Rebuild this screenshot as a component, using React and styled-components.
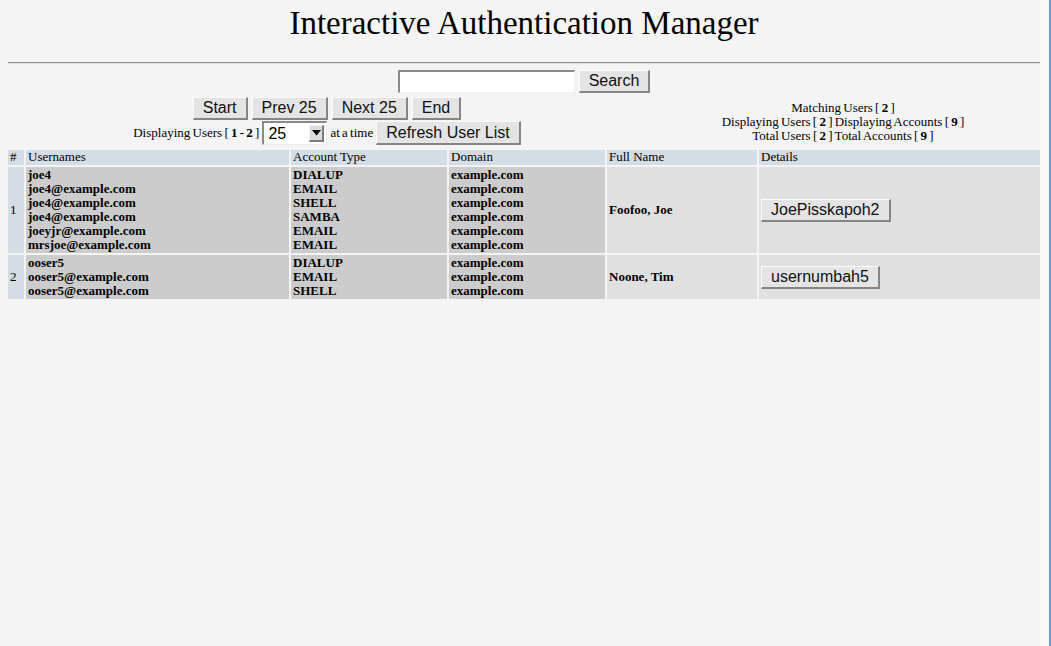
import React from "react";
import styled, { createGlobalStyle } from "styled-components";

const Global = createGlobalStyle`
  html, body { margin: 0; padding: 0; background: #f4f4f4; }
  body { font-family: "Liberation Serif", "Times New Roman", serif; font-size: 13px; color: #000; }
`;

const Frame = styled.div`
  display: flex;
  min-height: 646px;
`;

const Page = styled.div`
  width: 1032px;
  margin-left: 8px;
  display: flex;
  flex-direction: column;
`;

const Edge = styled.div`
  flex: 1;
  background: #f8f8f6;
  border-right: 2px solid #6f9fd8;
`;

const Title = styled.h1`
  margin: 3px 0 0;
  font-weight: normal;
  font-size: 33px;
  line-height: 41px;
  text-align: center;
`;

const Rule = styled.div`
  margin-top: 18px;
  height: 1px;
  background: #8c8c8c;
  border-bottom: 1px solid #e2e2e2;
`;

const SearchRow = styled.div`
  margin-top: 6px;
  display: flex;
  justify-content: center;
  gap: 4px;
`;

const TextInput = styled.input`
  box-sizing: border-box;
  width: 177px;
  height: 23px;
  background: #fff;
  border-style: solid;
  border-width: 2px 1px 1px 2px;
  border-color: #8a8a8a #f0f0f0 #f0f0f0 #8a8a8a;
  padding: 0 3px;
  font-family: "Liberation Sans", Arial, sans-serif;
  font-size: 16px;
  outline: none;
`;

const Button = styled.button`
  box-sizing: border-box;
  height: ${(p) => (p.$tall ? 24 : 23)}px;
  padding: 0 9px;
  background: #e4e4e4;
  border-style: solid;
  border-width: 1px 2px 2px 1px;
  border-color: #fbfbfb #858585 #858585 #fbfbfb;
  font-family: "Liberation Sans", Arial, sans-serif;
  font-size: 16px;
  line-height: 20px;
  color: #111;
  cursor: pointer;
  white-space: nowrap;
`;

const Controls = styled.div`
  margin-top: 4px;
  display: flex;
`;

const LeftCell = styled.div`
  width: 638px;
  display: flex;
  flex-direction: column;
  align-items: center;
  gap: 1px;
`;

const RightCell = styled.div`
  flex: 1;
  display: flex;
  flex-direction: column;
  justify-content: center;
  align-items: center;
  line-height: 14px;
  padding-top: 2px;
`;

const ButtonRow = styled.div`
  display: flex;
  align-items: center;
  gap: ${(p) => p.$gap || 4}px;
`;

const Label = styled.span`
  white-space: nowrap;
  line-height: 14px;
  word-spacing: -1px;
`;

const SelectBox = styled.div`
  box-sizing: border-box;
  width: 65px;
  height: 24px;
  display: flex;
  align-items: center;
  justify-content: space-between;
  background: #fff;
  border-style: solid;
  border-width: 2px 1px 1px 2px;
  border-color: #8a8a8a #eeeeee #eeeeee #8a8a8a;
  padding: 0 2px 0 4px;
  font-family: "Liberation Sans", Arial, sans-serif;
  font-size: 16px;
`;

const ArrowBox = styled.span`
  box-sizing: border-box;
  width: 15px;
  height: 17px;
  display: flex;
  align-items: center;
  justify-content: center;
  background: #dcdcdc;
  border-style: solid;
  border-width: 1px 2px 2px 1px;
  border-color: #f6f6f6 #7c7c7c #7c7c7c #f6f6f6;
`;

const Table = styled.table`
  margin: 3px -2px 0;
  width: 1036px;
  table-layout: fixed;
  border-collapse: separate;
  border-spacing: 2px;
`;

const Col = styled.col`
  width: ${(p) => p.$w}px;
`;

const Th = styled.th`
  background: #d4dde5;
  font-weight: normal;
  text-align: left;
  padding: 0 2px 1px;
  line-height: 14px;
  white-space: nowrap;
  overflow: hidden;
`;

const toneColors = {
  idx: "#d5dce3",
  dark: "#cccccc",
  light: "#e0e0e0",
};

const Td = styled.td`
  background: ${(p) => toneColors[p.$tone]};
  font-weight: ${(p) => (p.$tone === "idx" ? "normal" : "bold")};
  vertical-align: middle;
  padding: 1px 2px;
  line-height: 14px;
  white-space: nowrap;
  overflow: hidden;
`;

const Line = styled.div``;

const users = [
  {
    n: 1,
    accounts: [
      ["joe4", "DIALUP"],
      ["joe4@example.com", "EMAIL"],
      ["joe4@example.com", "SHELL"],
      ["joe4@example.com", "SAMBA"],
      ["joeyjr@example.com", "EMAIL"],
      ["mrsjoe@example.com", "EMAIL"],
    ],
    full: "Foofoo, Joe",
    btn: "JoePisskapoh2",
  },
  {
    n: 2,
    accounts: [
      ["ooser5", "DIALUP"],
      ["ooser5@example.com", "EMAIL"],
      ["ooser5@example.com", "SHELL"],
    ],
    full: "Noone, Tim",
    btn: "usernumbah5",
  },
];

export default function App() {
  return (
    <>
      <Global />
      <Frame>
        <Page>
          <Title>Interactive Authentication Manager</Title>
          <Rule />
          <SearchRow>
            <TextInput type="text" />
            <Button>Search</Button>
          </SearchRow>
          <Controls>
            <LeftCell>
              <ButtonRow>
                <Button>Start</Button>
                <Button>Prev 25</Button>
                <Button>Next 25</Button>
                <Button>End</Button>
              </ButtonRow>
              <ButtonRow $gap={3}>
                <Label>
                  Displaying Users [ <b>1 - 2</b> ]
                </Label>
                <SelectBox>
                  <span>25</span>
                  <ArrowBox>
                    <svg width="9" height="6" viewBox="0 0 9 6">
                      <path d="M0 0 H9 L4.5 5.5 Z" fill="#000" />
                    </svg>
                  </ArrowBox>
                </SelectBox>
                <Label>at a time</Label>
                <Button $tall>Refresh User List</Button>
              </ButtonRow>
            </LeftCell>
            <RightCell>
              <Label>
                Matching Users [ <b>2</b> ]
              </Label>
              <Label>
                Displaying Users [ <b>2</b> ] Displaying Accounts [ <b>9</b> ]
              </Label>
              <Label>
                Total Users [ <b>2</b> ] Total Accounts [ <b>9</b> ]
              </Label>
            </RightCell>
          </Controls>
          <Table>
            <colgroup>
              <Col $w={16} />
              <Col $w={263} />
              <Col $w={156} />
              <Col $w={156} />
              <Col $w={150} />
              <Col $w={281} />
            </colgroup>
            <thead>
              <tr>
                <Th>#</Th>
                <Th>Usernames</Th>
                <Th>Account Type</Th>
                <Th>Domain</Th>
                <Th>Full Name</Th>
                <Th>Details</Th>
              </tr>
            </thead>
            <tbody>
              {users.map((u) => (
                <tr key={u.n}>
                  <Td $tone="idx">{u.n}</Td>
                  <Td $tone="dark">
                    {u.accounts.map((a, i) => (
                      <Line key={i}>{a[0]}</Line>
                    ))}
                  </Td>
                  <Td $tone="dark">
                    {u.accounts.map((a, i) => (
                      <Line key={i}>{a[1]}</Line>
                    ))}
                  </Td>
                  <Td $tone="dark">
                    {u.accounts.map((a, i) => (
                      <Line key={i}>example.com</Line>
                    ))}
                  </Td>
                  <Td $tone="light">{u.full}</Td>
                  <Td $tone="light">
                    <Button>{u.btn}</Button>
                  </Td>
                </tr>
              ))}
            </tbody>
          </Table>
        </Page>
        <Edge />
      </Frame>
    </>
  );
}
